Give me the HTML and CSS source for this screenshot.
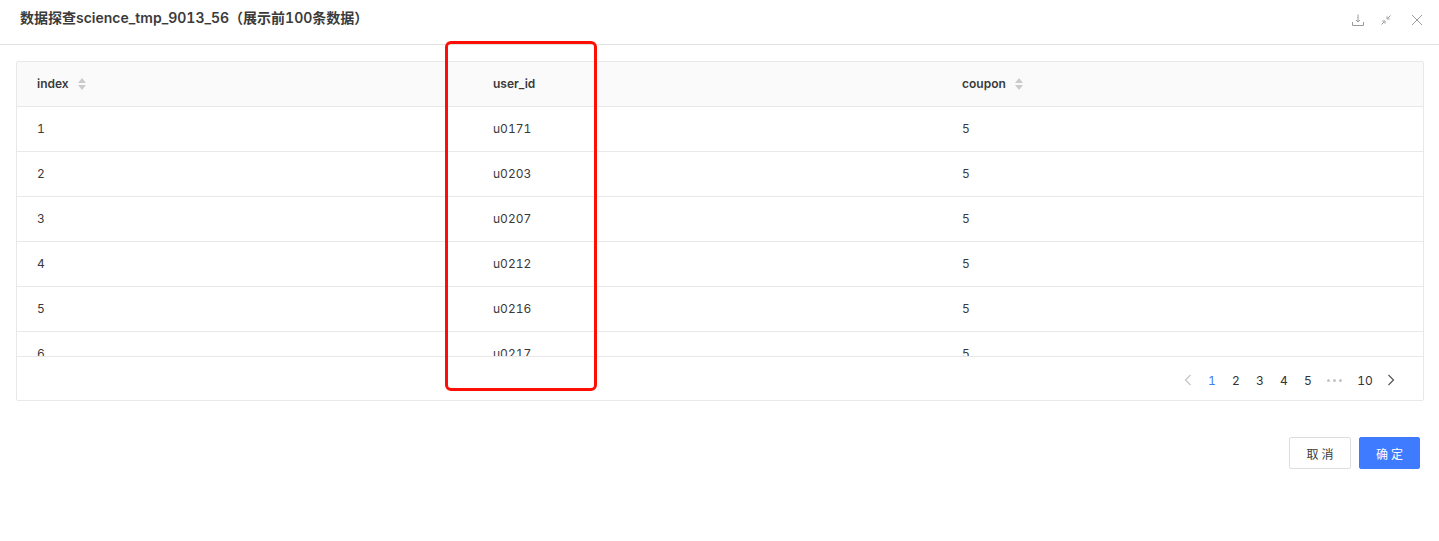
FILE: index.html
```html
<!DOCTYPE html>
<html lang="zh">
<head>
<meta charset="utf-8">
<title>数据探查</title>
<link rel="stylesheet" href="styles.css">
</head>
<body>
<div class="modal">
  <header class="modal-header">
    <h1 class="modal-title">数据探查science_tmp_9013_56（展示前100条数据）</h1>
    <div class="modal-tools">
      <svg class="tool" viewBox="0 0 12 12"><path d="M6 .5V7.5M4 6l2 2 2-2M.5 8v3.5h11V8"/></svg>
      <svg class="tool" viewBox="0 0 12 12"><path d="M1.5 10.5 4 8M5 9.6V7H2.4M10.5 1.5 8 4M7 2.4V5h2.6"/></svg>
      <svg class="tool tool-close" viewBox="0 0 12 12"><path d="M1 1 11 11M11 1 1 11"/></svg>
    </div>
  </header>
  <main class="modal-body">
    <section class="table-card">
      <div class="table-row table-head">
        <div class="cell">index<span class="sorter"><i class="up"></i><i class="down"></i></span></div>
        <div class="cell">user_id</div>
        <div class="cell">coupon<span class="sorter"><i class="up"></i><i class="down"></i></span></div>
      </div>
      <div class="table-scroll">
        <div class="table-row"><div class="cell">1</div><div class="cell">u0171</div><div class="cell">5</div></div>
        <div class="table-row"><div class="cell">2</div><div class="cell">u0203</div><div class="cell">5</div></div>
        <div class="table-row"><div class="cell">3</div><div class="cell">u0207</div><div class="cell">5</div></div>
        <div class="table-row"><div class="cell">4</div><div class="cell">u0212</div><div class="cell">5</div></div>
        <div class="table-row"><div class="cell">5</div><div class="cell">u0216</div><div class="cell">5</div></div>
        <div class="table-row"><div class="cell">6</div><div class="cell">u0217</div><div class="cell">5</div></div>
      </div>
      <nav class="pager">
        <svg class="arrow prev disabled" viewBox="0 0 8 12"><path d="M6.5 1 1.5 6l5 5"/></svg>
        <span class="page active">1</span>
        <span class="page">2</span>
        <span class="page">3</span>
        <span class="page">4</span>
        <span class="page">5</span>
        <span class="ellipsis"><b></b><b></b><b></b></span>
        <span class="page wide">10</span>
        <svg class="arrow" viewBox="0 0 8 12"><path d="M1.5 1l5 5-5 5"/></svg>
      </nav>
    </section>
  </main>
  <footer class="modal-footer">
    <button class="btn">取 消</button>
    <button class="btn primary">确 定</button>
  </footer>
</div>
<div class="highlight"></div>
</body>
</html>
```
FILE: styles.css
```css
* { box-sizing: border-box; }
html, body { margin: 0; height: 100%; background: #fff; overflow: hidden; }
body {
  font-family: "Inter", "Liberation Sans", "Noto Sans CJK SC", sans-serif;
  font-size: 12px;
  color: #3a3a3a;
  font-variant-numeric: tabular-nums;
}
.modal-header {
  height: 45px;
  border-bottom: 1px solid #e2e2e2;
  display: flex;
  align-items: flex-start;
  justify-content: space-between;
  padding: 10px 16px 0 20px;
}
.modal-title {
  margin: 0;
  font-size: 14px;
  line-height: 16px;
  font-weight: 600;
  color: #3b3b3b;
}
.modal-tools { display: flex; gap: 16px; padding-top: 4px; }
.tool { width: 12px; height: 12px; fill: none; stroke: #9a9a9a; stroke-width: 1; }
.tool-close { margin-left: 3px; }
.modal-body { padding: 16px 15px 0 16px; }
.table-card {
  border: 1px solid #e8e8e8;
  border-radius: 2px;
  height: 340px;
  display: flex;
  flex-direction: column;
}
.table-row {
  display: grid;
  grid-template-columns: 456px 469px 1fr;
  height: 45px;
  border-bottom: 1px solid #e8e8e8;
  flex: none;
}
.table-head { background: #fafafa; font-weight: 600; }
.cell { display: flex; align-items: center; padding: 0 0 2px 20px; }
.sorter { display: inline-flex; flex-direction: column; gap: 2px; margin-left: 9px; padding-top: 2px; }
.sorter i { display: block; width: 0; height: 0; border-left: 4.5px solid transparent; border-right: 4.5px solid transparent; }
.sorter .up { border-bottom: 5px solid #cbcbcb; }
.sorter .down { border-top: 5px solid #cbcbcb; }
.table-scroll { height: 250px; overflow: hidden; flex: none; border-bottom: 1px solid #e8e8e8; }
.pager {
  flex: 1;
  display: flex;
  align-items: center;
  justify-content: flex-end;
  padding: 3px 21px 0 0;
  color: #333;
}
.page { min-width: 24px; text-align: center; }
.page.wide { min-width: 30px; padding-left: 2px; }
.page.active { color: #3f7bff; }
.arrow { width: 8px; height: 12px; fill: none; stroke: #555; stroke-width: 1.2; margin: 0 7px 0 8px; }
.arrow.prev { margin-right: 8px; }
.arrow.disabled { stroke: #c4c4c4; }
.ellipsis { display: inline-flex; gap: 3px; width: 29px; justify-content: center; }
.ellipsis b { width: 3px; height: 3px; border-radius: 50%; background: #c4c4c4; }
.modal-footer {
  display: flex;
  justify-content: flex-end;
  gap: 8px;
  padding: 36px 19px 0 0;
}
.btn {
  width: 62px;
  height: 32px;
  border: 1px solid #ddd;
  border-radius: 2px;
  background: #fff;
  color: #3a3a3a;
  font: inherit;
  padding: 0;
}
.btn.primary { background: #3f7bff; border-color: #3f7bff; color: #fff; width: 61px; }
.highlight {
  position: absolute;
  left: 445px;
  top: 41px;
  width: 152px;
  height: 350px;
  border: 3px solid #fe0f05;
  border-radius: 6px;
}
```
